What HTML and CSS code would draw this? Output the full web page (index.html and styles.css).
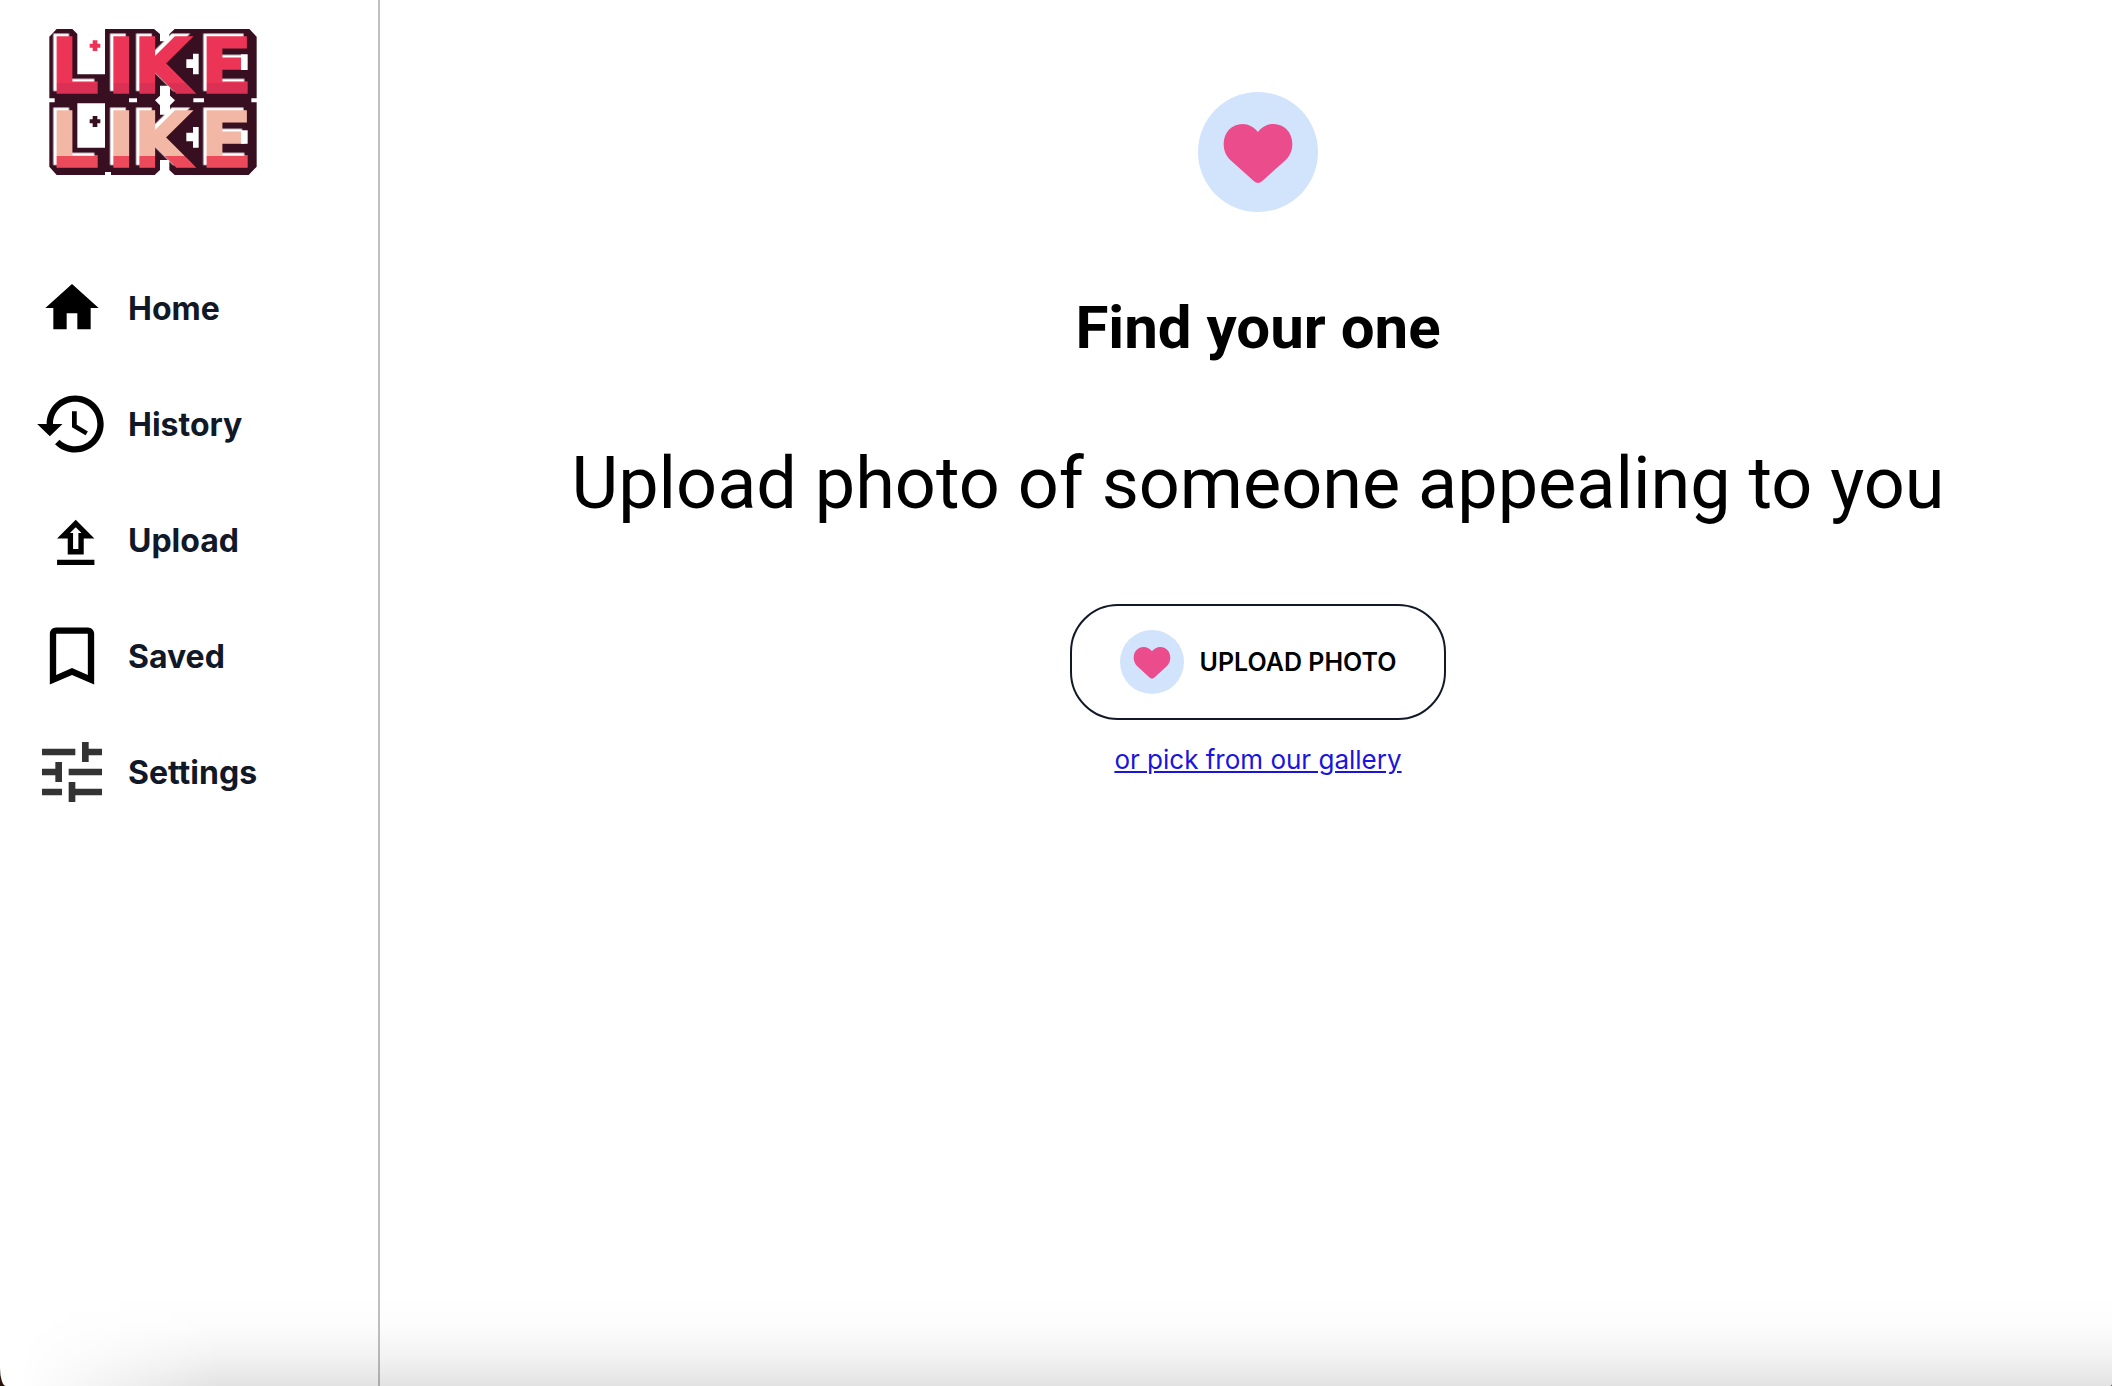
FILE: index.html
```html
<!DOCTYPE html>
<html lang="en">
<head>
    <meta charset="UTF-8">
    <meta name="viewport" content="width=device-width, initial-scale=1.0">
    <title>Like Like</title>
    <link rel="stylesheet" href="styles.css">
</head>
<body>

<svg class="defs" aria-hidden="true">
    <symbol id="heart" viewBox="0 0 360 360">
        <circle cx="180" cy="180" r="180" fill="#d2e3fc"/>
        <path fill="#ea4c8c" d="M180 120C168 105 152 96 133 96C102 96 77 121 77 156C77 176 85 192 97 204L168 268Q180 278 192 268L263 204C275 192 283 176 283 156C283 121 258 96 227 96C208 96 192 105 180 120Z"/>
    </symbol>
</svg>

<div class="page">
    <aside class="sidebar">
        <svg class="logo" viewBox="0 0 690 480" role="img" aria-label="Like Like">
            <defs>
                <linearGradient id="red" gradientUnits="userSpaceOnUse" x1="0" y1="42" x2="0" y2="219">
                    <stop offset="0.825" stop-color="#ec3556"/>
                    <stop offset="0.825" stop-color="#da3054"/>
                </linearGradient>
                <linearGradient id="peach" gradientUnits="userSpaceOnUse" x1="0" y1="260" x2="0" y2="440">
                    <stop offset="0.822" stop-color="#f3b8a5"/>
                    <stop offset="0.822" stop-color="#ec4a5a"/>
                </linearGradient>
            </defs>
            <!-- frame -->
            <path fill="#370f20" d="M28 50L50 27H97L112 42V163H195V27H342L360 42V64H388V42L404 27H628L650 50V235H634V247H650V440L626 465H404L388 450V420H360V450L344 465H213V456H195V465H50L28 440V247H44V235H28Z"/>
            <g fill="#fff">
                <path d="M112 250h83v133h-83zM267 235h24v12h-24zM460 235h32v12h-32z"/>
                <path d="M360 197h30v30l15 14-15 15v28h-30v-28l-15-15 15-14z"/>
            </g>
            <g class="logo-text">
                <text fill="url(#red)" stroke="url(#red)" x="31 201 279 481" y="219">LIKE</text>
                <text fill="url(#peach)" stroke="url(#peach)" x="31 201 279 481" y="440">LIKE</text>
            </g>
            <!-- sparkles -->
            <path fill="#fff" d="M459 101h17v62h-17v-19h-20v-26h20zM459 321h17v62h-17v-19h-20v-26h20zM603 103h20v47h-20zM603 331h20v40h-20z"/>
            <path fill="#ec3556" d="M158 61h14v10h9v12h-9v10h-14v-10h-9v-12h9z"/>
            <path fill="#370f20" d="M158 288h14v10h9v12h-9v11h-14v-11h-9v-12h9z"/>
        </svg>

        <nav class="menu">
            <a class="menu-item" href="#home">
                <svg class="icon small" viewBox="0 0 24 24"><path d="M10 20v-6h4v6h5v-8h3L12 3 2 12h3v8z"/></svg>
                <span>Home</span>
            </a>
            <a class="menu-item" href="#history">
                <svg class="icon" viewBox="0 0 24 24"><path d="M13 3c-4.97 0-9 4.03-9 9H1l4 3.9L9 12H6c0-3.87 3.13-7 7-7s7 3.13 7 7-3.13 7-7 7c-1.93 0-3.68-.79-4.94-2.06l-1.42 1.42C8.27 19.99 10.51 21 13 21c4.97 0 9-4.03 9-9s-4.03-9-9-9zm-1 5v5l4.28 2.54.72-1.21-3.5-2.08V8H12z"/></svg>
                <span>History</span>
            </a>
            <a class="menu-item" href="#upload">
                <svg class="icon small" viewBox="-1.4 -1.4 24 24"><path d="M9 16h6v-6h4l-7-7-7 7h4v6zm3-10.17L14.17 8H13v6h-2V8H9.83L12 5.83zM5 18h14v2H5v-2z"/></svg>
                <span>Upload</span>
            </a>
            <a class="menu-item" href="#saved">
                <svg class="icon" viewBox="0 0 24 24"><path d="M17 3H7c-1.1 0-2 .9-2 2v16l7-3 7 3V5c0-1.1-.9-2-2-2zm0 15l-5-2.18L7 18V5h10v13z"/></svg>
                <span>Saved</span>
            </a>
            <a class="menu-item" href="#settings">
                <svg class="icon large" viewBox="0 0 24 24"><path d="M3 17v2h6v-2H3zM3 5v2h10V5H3zm10 16v-2h8v-2h-8v-2h-2v6h2zM7 9v2H3v2h4v2h2V9H7zm14 4v-2H11v2h10zm-6-4h2V7h4V5h-4V3h-2v6z"/></svg>
                <span>Settings</span>
            </a>
        </nav>
    </aside>

    <main class="content">
        <svg class="hero-icon" aria-hidden="true"><use href="#heart"/></svg>
        <h1>Find your one</h1>
        <p class="subtitle">Upload photo of someone appealing to you</p>
        <button class="upload-button" type="button">
            <svg class="button-icon" aria-hidden="true"><use href="#heart"/></svg>
            UPLOAD PHOTO
        </button>
        <a class="gallery-link" href="#gallery">or pick from our gallery</a>
    </main>
</div>

</body>
</html>
```
FILE: styles.css
```css
* {
    box-sizing: border-box;
}

html {
    background: #2a1408;
}

body {
    margin: 0;
    font-family: Inter, sans-serif;
    color: #000;
}

.defs {
    display: none;
}

.page {
    display: flex;
    min-height: 100vh;
    background: #fff;
    border-radius: 0 0 2px 6px / 0 0 2px 18px;
    overflow: hidden;
}

/* Soft shade along the bottom edge of the window */
.page::after {
    content: '';
    position: fixed;
    left: 0;
    right: 0;
    bottom: 0;
    height: 90px;
    background: linear-gradient(to bottom, rgba(0, 0, 0, 0), rgba(0, 0, 0, 0.01) 35%, rgba(0, 0, 0, 0.05) 68%, rgba(0, 0, 0, 0.11));
    -webkit-mask-image: linear-gradient(to right, transparent 20px, #000 220px);
    mask-image: linear-gradient(to right, transparent 20px, #000 220px);
    border-radius: 0 0 2px 6px / 0 0 2px 18px;
    pointer-events: none;
}

.sidebar {
    flex: 0 0 380px;
    padding: 20px 32px;
    border-right: 2px solid #c0c0c0;
}

.logo {
    display: block;
    width: 230px;
    margin: 0 8px 70px;
    overflow: visible;
}

.logo-text {
    font-family: "DejaVu Sans", sans-serif;
    font-size: 230px;
    font-weight: bold;
    stroke-width: 4px;
    filter: drop-shadow(-10px -8px 0 #fff);
}

.menu {
    display: flex;
    flex-direction: column;
}

.menu-item {
    display: grid;
    grid-template-columns: 80px 1fr;
    align-items: center;
    gap: 16px;
    height: 116px;
    color: #111827;
    font-size: 32px;
    font-weight: 700;
    text-decoration: none;
}

.icon {
    justify-self: center;
    width: 76px;
    height: 76px;
    fill: #000;
}

.icon.small {
    width: 64px;
    height: 64px;
}

.icon.large {
    width: 80px;
    height: 80px;
    fill: #333;
}

.content {
    flex: 1;
    display: flex;
    flex-direction: column;
    align-items: center;
    padding: 92px 0 92px 24px;
}

.hero-icon {
    width: 120px;
    height: 120px;
}

h1 {
    margin: 80px 0 0;
    font-family: Roboto, sans-serif;
    font-size: 60px;
    line-height: 72px;
    font-weight: 700;
}

.subtitle {
    margin: 78px 0;
    font-family: Roboto, sans-serif;
    font-size: 72px;
    line-height: 84px;
    text-align: center;
}

.upload-button {
    display: flex;
    align-items: center;
    gap: 16px;
    height: 116px;
    padding: 0 48px;
    background: #fff;
    border: 2px solid #111827;
    border-radius: 48px;
    color: #000;
    font-family: Inter, sans-serif;
    font-size: 25px;
    font-weight: 600;
    cursor: pointer;
}

.button-icon {
    width: 64px;
    height: 64px;
}

.gallery-link {
    margin-top: 24px;
    color: #1a14e0;
    font-size: 26px;
    line-height: 32px;
}
```
